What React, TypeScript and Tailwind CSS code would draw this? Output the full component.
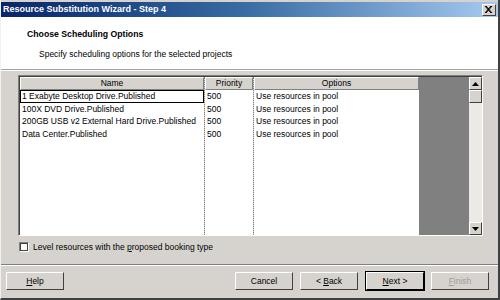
import React from 'react'

const rows = [
  '1 Exabyte Desktop Drive.Published',
  '100X DVD Drive.Published',
  '200GB USB v2 External Hard Drive.Published',
  'Data Center.Published',
]

const Btn = ({ label, u, rest, disabled, def }: { label?: string; u: string; rest: string; disabled?: boolean; def?: boolean }) => (
  <div
    className={
      'h-[18px] w-[58px] flex items-center justify-center bg-[#d6d3ce] border-t border-l border-t-white border-l-white border-r border-b ' +
      (def ? 'border-r-black border-b-black outline outline-1 outline-black' : 'border-r-[#404040] border-b-[#404040]')
    }
  >
    <span className={'whitespace-nowrap ' + (disabled ? 'text-[#a09d98]' : 'text-black')}>
      {label}
      <span className="underline">{u}</span>
      {rest}
    </span>
  </div>
)

const cellHead =
  'h-[13px] flex items-center justify-center bg-[#d6d3ce] border-t border-l border-white border-r border-b border-r-[#808080] border-b-[#808080]'

export default function App() {
  return (
    <div
      className="w-[500px] h-[300px] bg-[#d6d3ce] flex flex-col text-[8.5px] leading-none text-black border-r-2 border-b-2 border-r-[#404040] border-b-[#404040] border-l border-l-[#f0f0f0] overflow-hidden"
      style={{ fontFamily: '"Liberation Sans", Arial, sans-serif' }}
    >
      {/* title bar */}
      <div className="mt-[2px] h-[15px] flex items-center justify-between pl-[2px] pr-[2px] bg-gradient-to-r from-[#0a246a] via-[#3a6ea5] to-[#a6caf0]">
        <span className="text-white font-bold text-[9px] whitespace-nowrap">Resource Substitution Wizard - Step 4</span>
        <div className="w-[14px] h-[12px] bg-[#d6d3ce] border-t border-l border-white border-r border-b border-r-[#404040] border-b-[#404040] flex items-center justify-center">
          <svg width="8" height="7" viewBox="0 0 8 7">
            <path d="M1 0 L7 7 M0 0 L6 7 M6 0 L0 7 M7 0 L1 7" stroke="black" strokeWidth="1" />
          </svg>
        </div>
      </div>

      {/* header */}
      <div className="h-[53px] bg-white border-b border-b-[#a0a0a0] pl-[26px] pt-[13px]">
        <div className="font-bold text-[8.7px] whitespace-nowrap">Choose Scheduling Options</div>
        <div className="pl-[12px] mt-[11px] whitespace-nowrap">Specify scheduling options for the selected projects</div>
      </div>
      <div className="h-px bg-white" />

      {/* table */}
      <div className="ml-[17px] mr-[15px] mt-[4px] h-[161px] flex border-t border-l border-t-[#808080] border-l-[#808080] border-r border-b border-r-white border-b-white">
        <div className="flex-1 flex border-t border-l border-[#404040]">
          <div className="w-[185px] flex flex-col border-r border-dotted border-r-[#808080]">
            <div className={cellHead}>Name</div>
            <div className="flex-1 bg-white">
              {rows.map((r, i) => (
                <div
                  key={r}
                  className={'h-[12.5px] pl-[2px] flex items-center whitespace-nowrap ' + (i === 0 ? 'border border-black pl-px' : '')}
                >
                  {r}
                </div>
              ))}
            </div>
          </div>
          <div className="w-[49px] flex flex-col border-r border-dotted border-r-[#808080]">
            <div className={cellHead}>Priority</div>
            <div className="flex-1 bg-white">
              {rows.map(r => (
                <div key={r} className="h-[12.5px] pl-[2px] flex items-center">500</div>
              ))}
            </div>
          </div>
          <div className="w-[165px] flex flex-col">
            <div className={cellHead}>Options</div>
            <div className="flex-1 bg-white">
              {rows.map(r => (
                <div key={r} className="h-[12.5px] pl-[2px] flex items-center whitespace-nowrap">Use resources in pool</div>
              ))}
            </div>
          </div>
          <div className="flex-1 bg-[#808080]" />
          {/* scrollbar */}
          <div className="w-[13px] flex flex-col bg-[#eceae6]">
            <div className="h-[13px] bg-[#d6d3ce] border-t border-l border-white border-r border-b border-r-[#404040] border-b-[#404040] flex items-center justify-center">
              <svg width="7" height="4" viewBox="0 0 7 4"><path d="M3.5 0 L7 4 L0 4 Z" fill="black" /></svg>
            </div>
            <div className="h-[13px] bg-[#d6d3ce] border-t border-l border-white border-r border-b border-r-[#404040] border-b-[#404040]" />
            <div className="flex-1" />
            <div className="h-[13px] bg-[#d6d3ce] border-t border-l border-white border-r border-b border-r-[#404040] border-b-[#404040] flex items-center justify-center">
              <svg width="7" height="4" viewBox="0 0 7 4"><path d="M0 0 L7 0 L3.5 4 Z" fill="black" /></svg>
            </div>
          </div>
        </div>
      </div>

      {/* checkbox */}
      <div className="ml-[18px] mt-[5px] h-[12px] flex items-center gap-[4px]">
        <div className="w-[10px] h-[10px] bg-white border-t border-l border-[#808080] border-r border-b border-r-white border-b-white outline outline-1 outline-[#404040] -outline-offset-2" />
        <span className="whitespace-nowrap">
          Level resources with the <span className="underline">p</span>roposed booking type
        </span>
      </div>

      {/* separator */}
      <div className="mt-[11px] h-px bg-[#808080]" />
      <div className="h-px bg-white" />

      {/* buttons */}
      <div className="mt-[6px] flex items-center pl-[5px] pr-[9px]">
        <Btn u="H" rest="elp" />
        <div className="flex-1" />
        <Btn u="" rest="Cancel" />
        <div className="w-[7px]" />
        <Btn label="< " u="B" rest="ack" />
        <div className="w-[8px]" />
        <Btn u="N" rest="ext >" def />
        <div className="w-[7px]" />
        <Btn u="F" rest="inish" disabled />
      </div>
    </div>
  )
}
